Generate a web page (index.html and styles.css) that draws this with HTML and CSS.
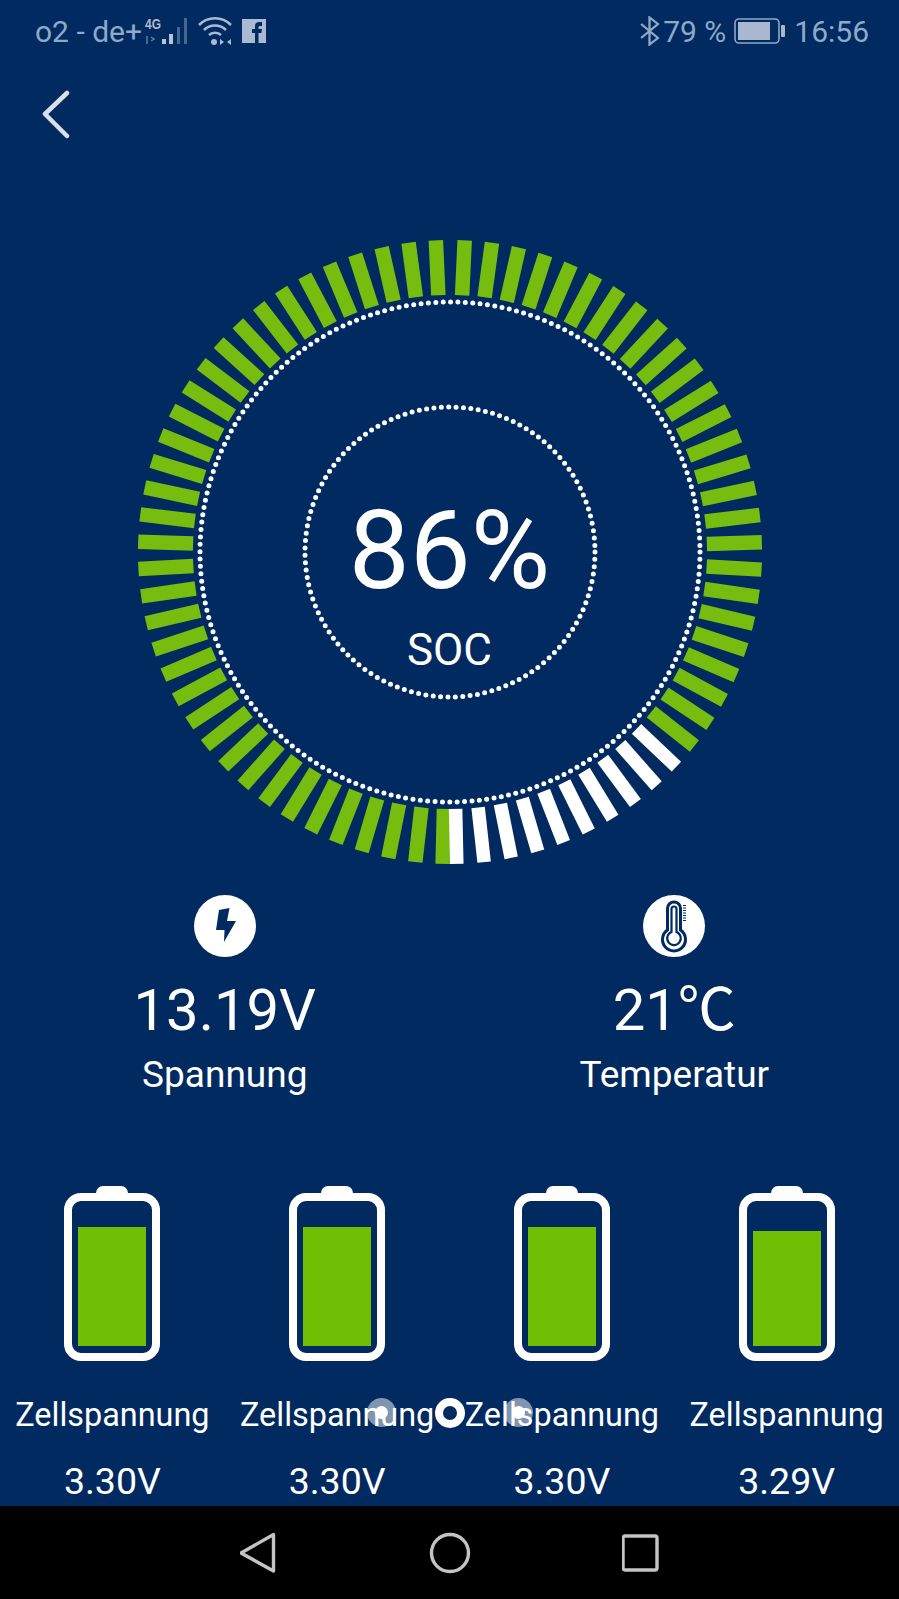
FILE: index.html
```html
<!DOCTYPE html>
<html lang="de">
<head>
  <meta charset="UTF-8" />
  <meta name="viewport" content="width=device-width, initial-scale=1.0"/>
  <title>Batterie</title>
  <link rel="stylesheet" href="styles.css">
</head>
<body>
  <div class="screen">

    <div class="status-bar">
      <div class="status-left">
        <span class="carrier">o2 - de+</span>
        <svg class="signal" width="46" height="32" viewBox="0 0 46 32">
          <text x="0" y="14" class="net-label" textLength="16" lengthAdjust="spacingAndGlyphs">4G</text>
          <path d="M2 21v8M6 26l3-2-3-2" fill="none" stroke="#5f7ea6" stroke-width="1.5"/>
          <rect x="17" y="24" width="4" height="5" fill="#b4c3d8"/>
          <rect x="24" y="19" width="4" height="10" fill="#b4c3d8"/>
          <rect x="32" y="12" width="3" height="17" fill="#47668f"/>
          <rect x="39" y="3" width="3" height="26" fill="#47668f"/>
        </svg>
        <svg class="wifi" width="34" height="30" viewBox="0 0 34 30">
          <g fill="none" stroke="#a9bad2" stroke-width="2.6">
            <path d="M1 9C10 0 24 0 33 9"/>
            <path d="M6 14C12 8 22 8 28 14"/>
            <path d="M11 19C14 16 20 16 23 19"/>
          </g>
          <circle cx="16" cy="26" r="3" fill="#a9bad2"/>
          <path d="M22 23l4 3-4 3zM33 23l-4 3 4 3z" fill="#a9bad2"/>
        </svg>
        <svg class="fb" width="24" height="24" viewBox="0 0 24 24">
          <rect width="24" height="24" fill="#a9bad2"/>
          <path d="M13 24V14h-3v-4h3V7c0-3 2-4 4-4h3v4h-2c-1 0-1.500 .5-1.500 1.500V10H20l-.6 4h-2.900v10z" fill="#012a60"/>
        </svg>
      </div>
      <div class="status-right">
        <svg class="bluetooth" width="21" height="30" viewBox="0 0 20 30" preserveAspectRatio="none">
          <path d="M2 8l16 14-8 6.500V1.500l8 6.500L2 22" fill="none" stroke="#8fa9c9" stroke-width="2.200"/>
        </svg>
        <span class="battery-pct">79 %</span>
        <svg class="phone-battery" width="51" height="26" viewBox="0 0 51 26">
          <rect x="1" y="1" width="44" height="24" rx="4" fill="none" stroke="#8fa9c9" stroke-width="1.600"/>
          <rect x="4" y="4" width="32" height="18" fill="#a9b8cf"/>
          <rect x="47" y="7" width="4" height="12" rx="1" fill="#a9b8cf"/>
        </svg>
        <span class="clock">16:56</span>
      </div>
    </div>

    <div class="top-nav">
      <svg width="32" height="52" viewBox="0 0 32 52">
        <path d="M27 3L5 24l22 22" fill="none" stroke="#d9e0ea" stroke-width="4.500" stroke-linecap="round" stroke-linejoin="round"/>
      </svg>
    </div>

    <div class="gauge">
      <svg id="gauge-svg" width="640" height="640" viewBox="-320 -320 640 640">
        <g id="gauge-ticks"></g>
        <circle class="dots" r="250"/>
        <circle class="dots" r="145"/>
      </svg>
      <div class="gauge-text">
        <div class="soc-value">86%</div>
        <div class="soc-label">SOC</div>
      </div>
    </div>

    <div class="stats">
      <div class="stat">
        <svg class="stat-icon" width="62" height="62" viewBox="0 0 62 62">
          <circle cx="31" cy="31" r="31" fill="#fff"/>
          <path d="M25 15L35.500 13 33 26H42L30 47 30.500 35H22Z" fill="#012a60"/>
        </svg>
        <div class="stat-value">13.19V</div>
        <div class="stat-label">Spannung</div>
      </div>
      <div class="stat">
        <svg class="stat-icon" width="62" height="62" viewBox="0 0 62 62">
          <circle cx="31" cy="31" r="31" fill="#fff"/>
          <g fill="none" stroke="#012a60">
            <path d="M24.500 35V13.500a6.500 6.500 0 0 1 13 0V35a11.500 11.500 0 1 1-13 0Z" stroke-width="3"/>
            <path d="M28.500 37V14a2.500 2.500 0 0 1 5 0V37a6.800 6.800 0 1 1-5 0Z" stroke-width="2.200"/>
            <path d="M41.500 10V27" stroke-width="3" stroke-dasharray="1 1.500"/>
          </g>
        </svg>
        <div class="stat-value">21℃</div>
        <div class="stat-label">Temperatur</div>
      </div>
    </div>

    <div class="cells">
      <div class="cell">
        <div class="cell-battery"><div class="cell-fill"></div></div>
        <div class="cell-label">Zellspannung</div>
        <div class="cell-value">3.30V</div>
      </div>
      <div class="cell">
        <div class="cell-battery"><div class="cell-fill"></div></div>
        <div class="cell-label">Zellspannung</div>
        <div class="cell-value">3.30V</div>
      </div>
      <div class="cell">
        <div class="cell-battery"><div class="cell-fill"></div></div>
        <div class="cell-label">Zellspannung</div>
        <div class="cell-value">3.30V</div>
      </div>
      <div class="cell">
        <div class="cell-battery"><div class="cell-fill cell-fill-low"></div></div>
        <div class="cell-label">Zellspannung</div>
        <div class="cell-value">3.29V</div>
      </div>
      <div class="pager">
        <span class="pager-dot"></span>
        <span class="pager-dot pager-dot-active"></span>
        <span class="pager-dot"></span>
      </div>
    </div>

    <div class="nav-bar">
      <svg width="38" height="42" viewBox="1.500 0 38 42">
        <path d="M35 2.500V39L2.500 21Z" fill="none" stroke="#c4c4c4" stroke-width="3.400" stroke-linejoin="round"/>
      </svg>
      <svg width="42" height="42" viewBox="0 0 42 42">
        <circle cx="21" cy="21" r="18.500" fill="none" stroke="#c4c4c4" stroke-width="3.400"/>
      </svg>
      <svg width="38" height="38" viewBox="1 0 38 38">
        <rect x="2" y="2" width="34" height="34" rx="2" fill="none" stroke="#c4c4c4" stroke-width="3.400"/>
      </svg>
    </div>

  </div>

  <script>
    // 72 ticks, a little wider gap at the top than at the bottom
    const ticks = document.getElementById('gauge-ticks');
    const STEP = 5.03;
    const LAST_GREEN = 25;

    function addTick(angle, cls) {
      const line = document.createElementNS('http://www.w3.org/2000/svg', 'line');
      line.setAttribute('y1', -257);
      line.setAttribute('y2', -312);
      line.setAttribute('transform', 'rotate(' + angle + ')');
      line.setAttribute('class', cls);
      ticks.appendChild(line);
    }

    for (let i = 0; i < 36; i++) {
      addTick(-2.6 - STEP * i, 'tick-green');
      addTick(2.7 + STEP * i, i <= LAST_GREEN ? 'tick-green' : 'tick-white');
    }
  </script>
</body>
</html>
```

FILE: styles.css
```css
* {
  box-sizing: border-box;
}

body {
  margin: 0;
  background-color: #012a60;
  font-family: Roboto, "Liberation Sans", sans-serif;
}

.screen {
  width: 899px;
  height: 1599px;
  display: flex;
  flex-direction: column;
  background-color: #012a60;
  color: #fff;
  overflow: hidden;
}

/* status bar */
.status-bar {
  height: 62px;
  display: flex;
  justify-content: space-between;
  align-items: center;
  padding: 0 30px 0 35px;
  font-size: 30px;
  color: #8fa9c9;
}

.status-left,
.status-right {
  display: flex;
  align-items: center;
}

.signal {
  margin-left: 3px;
}

.net-label {
  font-family: "Liberation Sans", Roboto, sans-serif;
  font-size: 15px;
  font-weight: 700;
  fill: #a9bad2;
}

.wifi {
  margin-left: 7px;
}

.fb {
  margin-left: 10px;
}

.battery-pct {
  margin-left: 3px;
}

.phone-battery {
  margin-left: 8px;
}

.clock {
  margin-left: 9px;
}

/* back arrow */
.top-nav {
  height: 170px;
  padding: 28px 0 0 40px;
}

/* SOC ring */
.gauge {
  position: relative;
  width: 640px;
  height: 640px;
  margin: 0 auto;
  flex: none;
}

.gauge svg {
  display: block;
}

.tick-green {
  stroke: #76bd10;
  stroke-width: 14.500;
}

.tick-white {
  stroke: #fff;
  stroke-width: 13.500;
}

.dots {
  fill: none;
  stroke: #fff;
  stroke-width: 5px;
  stroke-linecap: round;
  stroke-dasharray: 0 7.410;
}

.gauge-text {
  position: absolute;
  top: 266px;
  left: 0;
  right: 0;
  text-align: center;
}

.soc-value {
  font-size: 108.500px;
  line-height: 106px;
}

.soc-label {
  margin-top: 24px;
  font-size: 44px;
  line-height: 44px;
}

/* voltage + temperature */
.stats {
  display: grid;
  grid-template-columns: 1fr 1fr;
  height: 314px;
  padding-top: 23px;
}

.stat {
  display: flex;
  flex-direction: column;
  align-items: center;
}

.stat-icon {
  display: block;
}

.stat-value {
  margin-top: 21px;
  font-family: Roboto, "Noto Sans CJK SC", sans-serif;
  font-size: 58px;
  line-height: 64px;
}

.stat-label {
  margin-top: 11px;
  font-size: 37px;
  line-height: 44px;
}

/* cell batteries */
.cells {
  position: relative;
  display: grid;
  grid-template-columns: repeat(4, 1fr);
  height: 320px;
}

.cell {
  display: flex;
  flex-direction: column;
  align-items: center;
}

.cell-battery {
  position: relative;
  display: flex;
  align-items: flex-end;
  width: 96px;
  height: 168px;
  margin-top: 7px;
  padding: 0 6px 7px;
  border: 8px solid #fff;
  border-radius: 17px;
}

.cell-battery::before {
  content: "";
  position: absolute;
  top: -15px;
  left: 24px;
  width: 32px;
  height: 9px;
  background-color: #fff;
  border-radius: 7px 7px 0 0;
}

.cell-fill {
  width: 100%;
  height: 119px;
  background-color: #71bf05;
}

.cell-fill-low {
  height: 115px;
}

.cell-label {
  margin-top: 34px;
  font-size: 32.400px;
  line-height: 40px;
  white-space: nowrap;
}

.cell-value {
  margin-top: 26px;
  font-size: 37.500px;
  line-height: 40px;
}

/* page dots lie over the labels */
.pager {
  position: absolute;
  top: 212px;
  left: 367px;
  display: flex;
  gap: 39px;
}

.pager-dot {
  position: relative;
  width: 29px;
  height: 29px;
  border-radius: 50%;
  background-color: rgba(255, 255, 255, 0.5);
}

.pager-dot::after {
  content: "";
  position: absolute;
  top: 8px;
  left: 8px;
  width: 13px;
  height: 13px;
  border-radius: 50%;
  background-color: #fff;
}

.pager-dot-active {
  width: 30px;
  height: 30px;
  background-color: #012a60;
  border: 8px solid #fff;
}

.pager-dot-active::after {
  display: none;
}

/* android buttons */
.nav-bar {
  flex: 1;
  display: flex;
  justify-content: center;
  align-items: center;
  gap: 151px;
  background-color: #000;
}

.nav-bar svg {
  display: block;
}
```
